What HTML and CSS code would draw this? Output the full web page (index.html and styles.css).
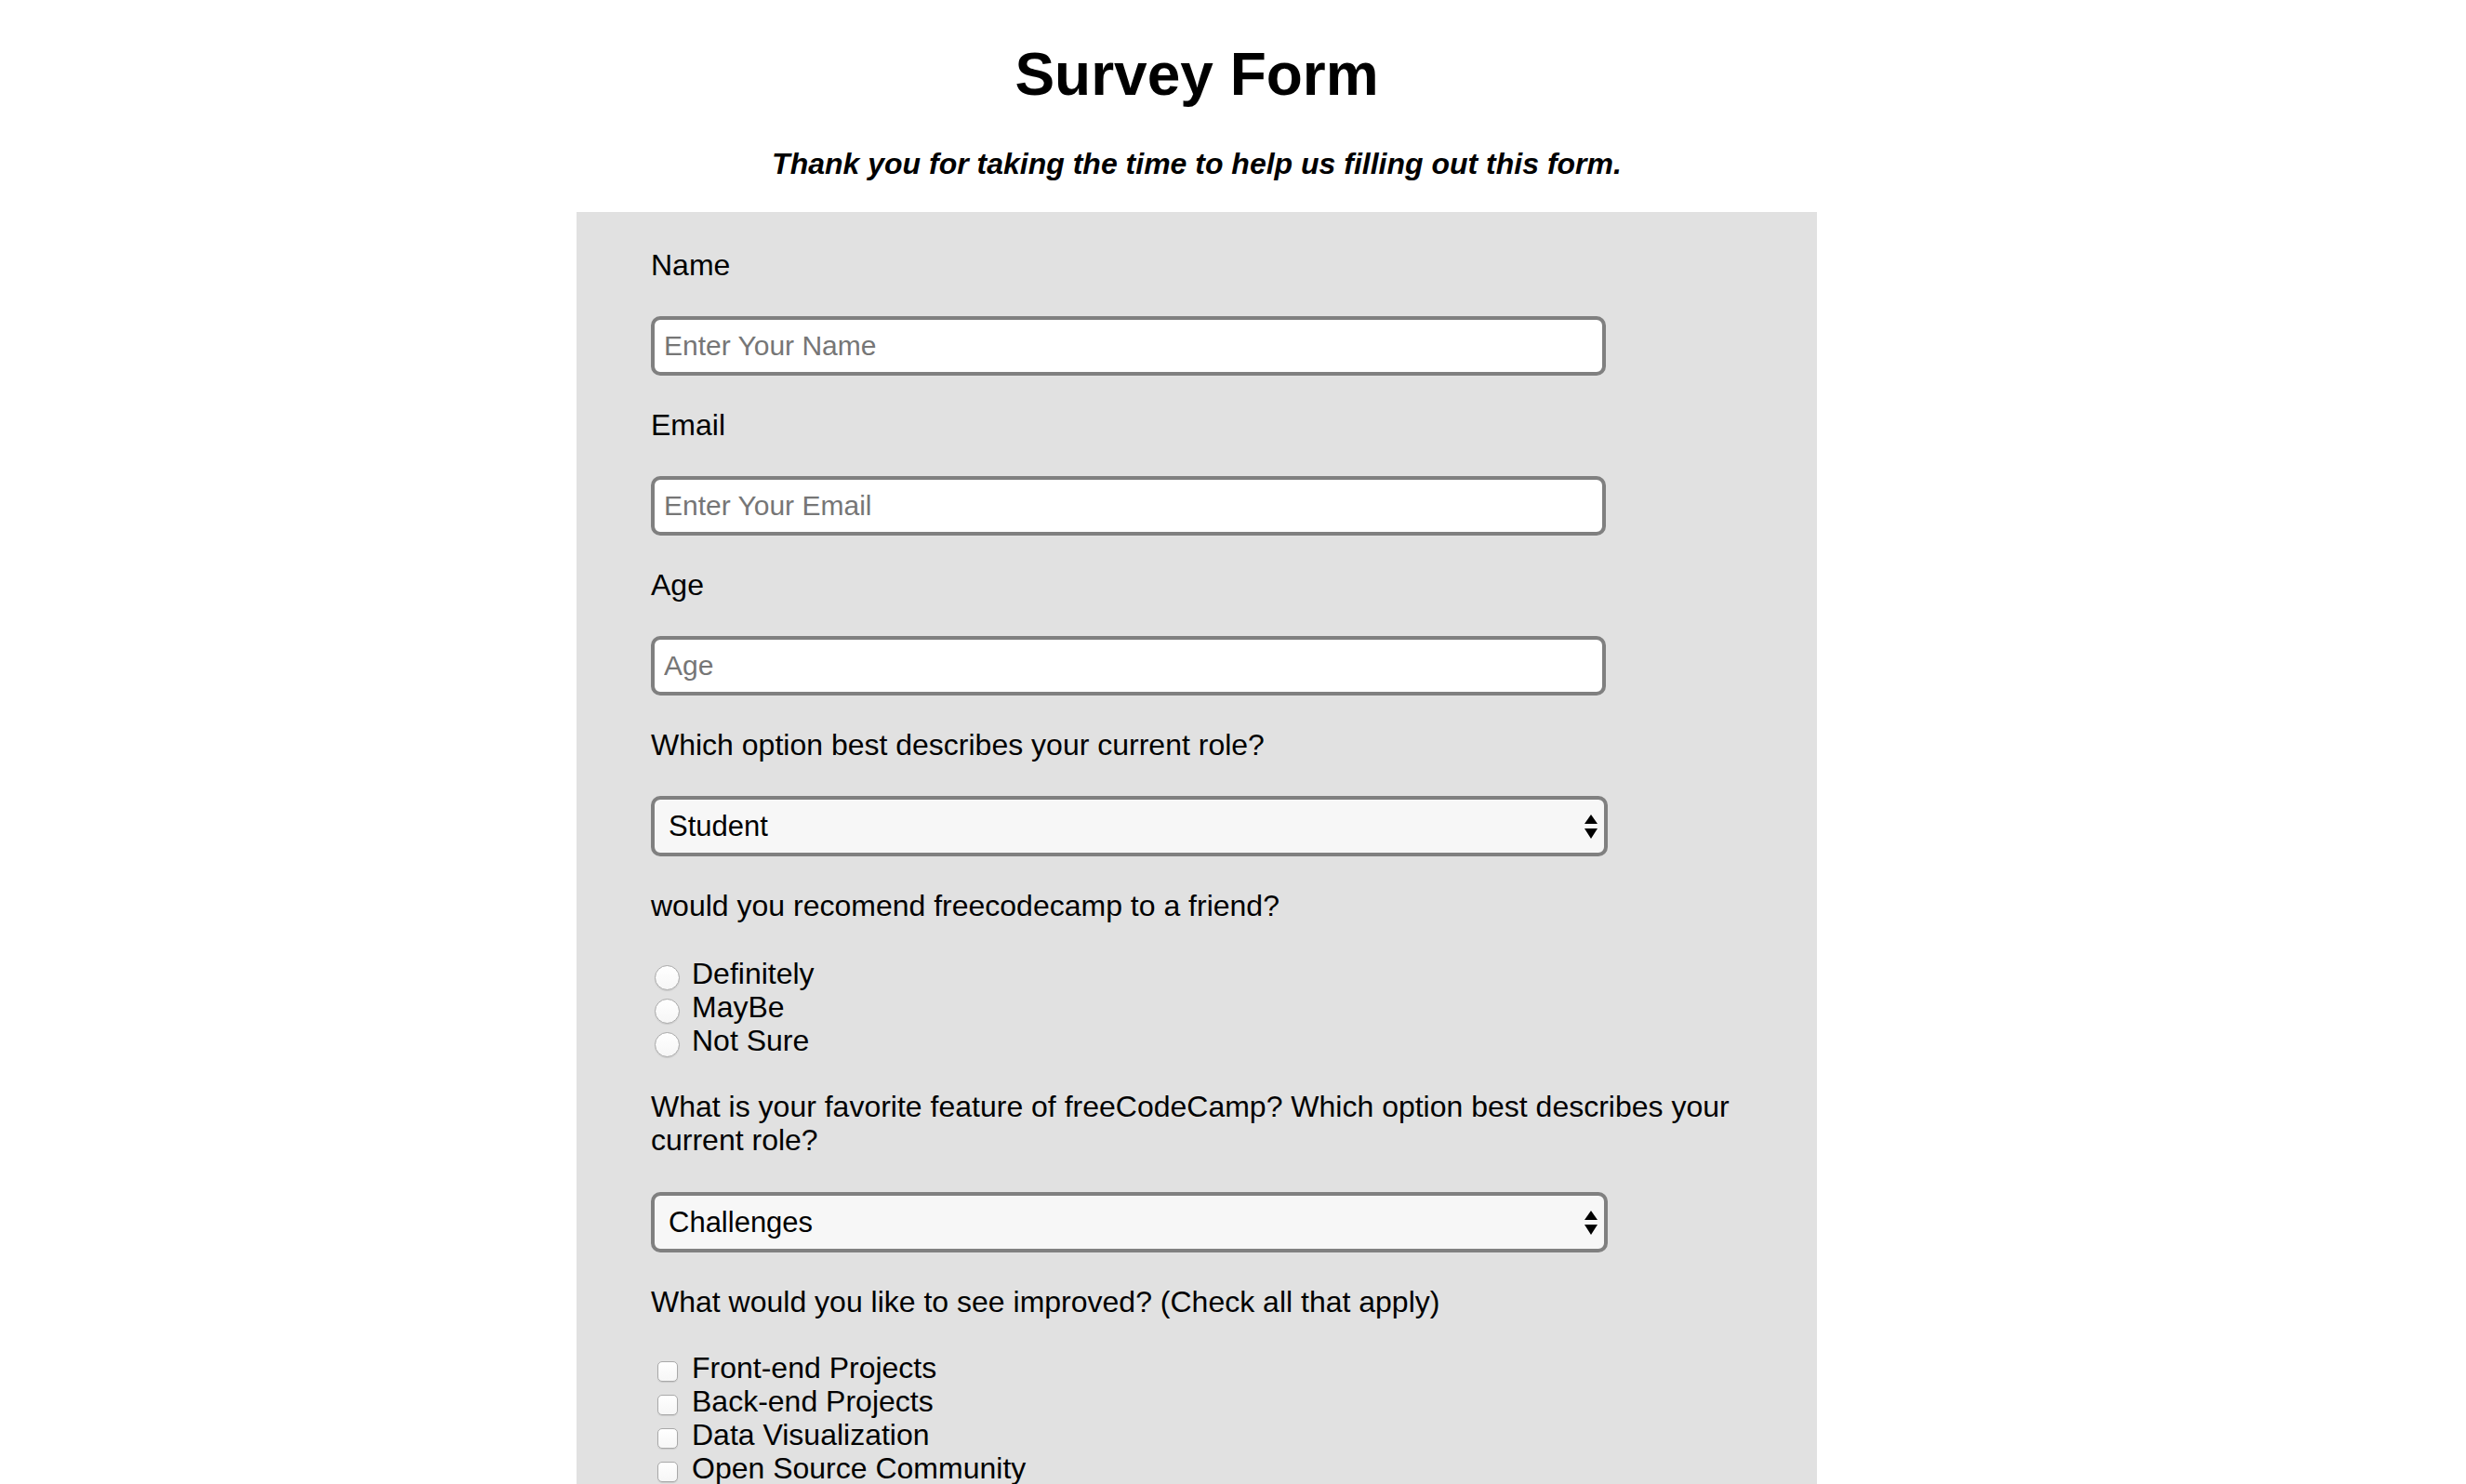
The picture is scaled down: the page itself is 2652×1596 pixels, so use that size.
FILE: index.html
```html
<!DOCTYPE html>
<html lang="en">
<head>
<meta charset="utf-8">
<title>Survey Form</title>
<link rel="stylesheet" href="styles.css">
</head>
<body>
<div class="page">
  <header class="head">
    <h1 class="title" id="title">Survey Form</h1>
    <p class="subtitle" id="description">Thank you for taking the time to help us filling out this form.</p>
  </header>
  <form class="survey" id="survey-form">
    <div class="group">
      <label class="q" for="name">Name</label>
      <input class="field" id="name" type="text" placeholder="Enter Your Name">
    </div>
    <div class="group">
      <label class="q" for="email">Email</label>
      <input class="field" id="email" type="email" placeholder="Enter Your Email">
    </div>
    <div class="group">
      <label class="q" for="number">Age</label>
      <input class="field" id="number" type="number" placeholder="Age">
    </div>
    <div class="group">
      <label class="q" for="dropdown">Which option best describes your current role?</label>
      <div class="select-wrap">
        <select class="select" id="dropdown">
          <option>Student</option>
          <option>Full Time Job</option>
          <option>Full Time Learner</option>
          <option>Prefer not to say</option>
          <option>Other</option>
        </select>
        <svg class="arrows" width="14" height="26" viewBox="0 0 14 26"><path d="M7 0 L14 10 L0 10 Z M0 15 L14 15 L7 26 Z" fill="#000"/></svg>
      </div>
    </div>
    <div class="group">
      <p class="q">would you recomend freecodecamp to a friend?</p>
      <label class="opt"><input class="radio" type="radio" name="rec" value="definitely">Definitely</label>
      <label class="opt"><input class="radio" type="radio" name="rec" value="maybe">MayBe</label>
      <label class="opt"><input class="radio" type="radio" name="rec" value="notsure">Not Sure</label>
    </div>
    <div class="group">
      <label class="q q-wrap" for="feature">What is your favorite feature of freeCodeCamp? Which option best describes your current role?</label>
      <div class="select-wrap">
        <select class="select" id="feature">
          <option>Challenges</option>
          <option>Projects</option>
          <option>Community</option>
          <option>Open Source</option>
        </select>
        <svg class="arrows" width="14" height="26" viewBox="0 0 14 26"><path d="M7 0 L14 10 L0 10 Z M0 15 L14 15 L7 26 Z" fill="#000"/></svg>
      </div>
    </div>
    <div class="group">
      <p class="q q-tight">What would you like to see improved? (Check all that apply)</p>
      <label class="opt"><input class="check" type="checkbox" value="front">Front-end Projects</label>
      <label class="opt"><input class="check" type="checkbox" value="back">Back-end Projects</label>
      <label class="opt"><input class="check" type="checkbox" value="data">Data Visualization</label>
      <label class="opt"><input class="check" type="checkbox" value="open">Open Source Community</label>
      <label class="opt"><input class="check" type="checkbox" value="gitter">Gitter help rooms</label>
      <label class="opt"><input class="check" type="checkbox" value="videos">Videos</label>
      <label class="opt"><input class="check" type="checkbox" value="meetups">City Meetups</label>
      <label class="opt"><input class="check" type="checkbox" value="wiki">Wiki</label>
    </div>
  </form>
</div>
</body>
</html>
```

FILE: styles.css
```css
html, body {
  margin: 0;
  padding: 0;
  background: #ffffff;
}

body {
  font-family: "Liberation Sans", Arial, Helvetica, sans-serif;
  color: #000000;
}

.page {
  width: 2574px;
}

.head {
  padding-top: 43px;
  text-align: center;
}

.title {
  margin: 0;
  font-size: 64px;
  line-height: 74px;
  font-weight: 700;
}

.subtitle {
  margin: 41px 0 0;
  font-size: 32px;
  line-height: 36px;
  font-weight: 700;
  font-style: italic;
}

.survey {
  box-sizing: border-box;
  width: 1334px;
  margin: 34px auto 0;
  padding: 39px 80px 40px;
  background: #e1e1e1;
}

.group {
  margin-bottom: 35px;
}

.q {
  display: block;
  margin: 0 0 37px;
  font-size: 32px;
  line-height: 36px;
  font-weight: 400;
}

.q-wrap {
  margin-bottom: 38px;
}

.q-tight {
  margin-bottom: 35px;
}

.field {
  display: block;
  box-sizing: border-box;
  width: 1027px;
  height: 64px;
  margin: 0;
  padding: 0 0 0 10px;
  border: 4px solid #808080;
  border-radius: 10px;
  background: #ffffff;
  font-family: "Liberation Sans", Arial, sans-serif;
  font-size: 30px;
  color: #000000;
  outline: none;
}

.field::placeholder {
  color: #767676;
  opacity: 1;
}

.field::-webkit-outer-spin-button,
.field::-webkit-inner-spin-button {
  -webkit-appearance: none;
  margin: 0;
}

.select-wrap {
  position: relative;
  width: 1029px;
}

.select {
  -webkit-appearance: none;
  appearance: none;
  display: block;
  box-sizing: border-box;
  width: 100%;
  height: 65px;
  margin: 0;
  padding: 0 0 0 15px;
  border: 4px solid #808080;
  border-radius: 10px;
  background: #f7f7f7;
  font-family: "Liberation Sans", Arial, sans-serif;
  font-size: 31px;
  color: #000000;
  outline: none;
}

.arrows {
  position: absolute;
  top: 20px;
  right: 11px;
  pointer-events: none;
}

.opt {
  display: flex;
  align-items: center;
  height: 36px;
  font-size: 32px;
  line-height: 36px;
}

.radio {
  -webkit-appearance: none;
  appearance: none;
  box-sizing: border-box;
  width: 27px;
  height: 27px;
  margin: 8px 13px 0 4px;
  border: 1px solid #a9a9a9;
  border-radius: 50%;
  background: linear-gradient(#ffffff, #f6f6f6);
  box-shadow: 0 1px 1px rgba(0, 0, 0, 0.1);
}

.check {
  -webkit-appearance: none;
  appearance: none;
  box-sizing: border-box;
  width: 22px;
  height: 22px;
  margin: 8px 15px 0 7px;
  border: 1px solid #a9a9a9;
  border-radius: 5px;
  background: linear-gradient(#ffffff, #f6f6f6);
  box-shadow: 0 1px 1px rgba(0, 0, 0, 0.1);
}
```
